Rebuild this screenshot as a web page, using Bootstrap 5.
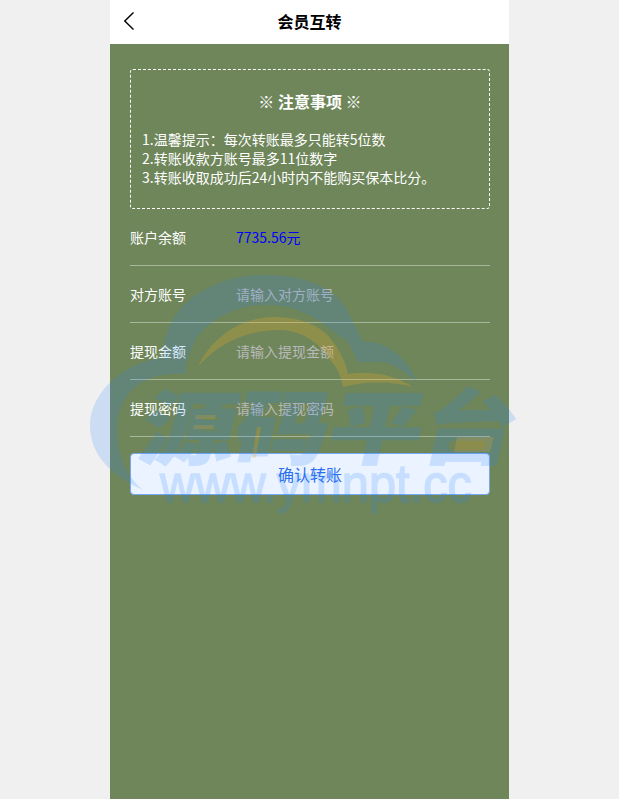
<!DOCTYPE html>
<html lang="zh-CN">
<head>
<meta charset="utf-8">
<title>会员互转</title>
<link href="https://cdn.jsdelivr.net/npm/bootstrap@5.3.0/dist/css/bootstrap.min.css" rel="stylesheet">
<style>
html,body{height:100%;}
body{background:#f0f0f0;font-family:"Noto Sans CJK SC","Liberation Sans",sans-serif;font-size:14px;overflow:hidden;}
.phone{width:399px;min-height:799px;background:#6e8659;}
.topbar{height:44px;background:#fff;color:#000;}
.topbar-title{font-size:16px;font-weight:700;line-height:42px;}
.back-icon{left:14px;top:12px;}
.form-area{padding:25px 19px 0 20px;}
.notice{height:140px;border:1px dashed #fff;border-radius:3px;color:#fff;padding:19px 11px 0;}
.notice-title{font-size:16px;font-weight:700;line-height:24px;margin:0 0 17px;}
.notice-text{line-height:19px;font-size:14px;}
.field{height:57px;border-bottom:1px solid rgba(255,255,255,.4);color:#fff;line-height:20px;}
.field-label{width:106px;flex:none;}
.field-value{color:#00f;}
.field-input{background:transparent;border:0;border-radius:0;padding:0;color:#fff;font-size:14px;box-shadow:none;}
.field-input::placeholder{color:#b9b9b9;opacity:1;}
.field-input:focus{background:transparent;box-shadow:none;color:#fff;}
.submit-btn{height:42px;margin-top:16px;background:#eaf3ff;border:1px solid #76a9f5;border-radius:4px;color:#2a6ef0;font-size:16px;padding:0;}
.watermark{left:0;top:0;pointer-events:none;}
.wm-blue{opacity:.18;fill:#2c85ff;stroke:#2c85ff;}
.wm-cn{font-family:"Noto Sans CJK SC",sans-serif;font-weight:900;font-size:92px;stroke-width:1px;}
.wm-en{font-family:"Liberation Sans",sans-serif;font-size:54px;stroke-width:1.5px;}
</style>
</head>
<body>
<div class="phone mx-auto">
  <header class="topbar position-relative text-center">
    <svg class="back-icon position-absolute" width="12" height="20" viewBox="0 0 12 20"><path d="M9.5 0.5 L0.8 9 L9.5 17.5" fill="none" stroke="#000" stroke-width="1.4"/></svg>
    <div class="topbar-title">会员互转</div>
  </header>
  <main class="form-area">
    <section class="notice">
      <h2 class="notice-title text-center">※ 注意事项 ※</h2>
      <div class="notice-text">1.温馨提示：每次转账最多只能转5位数<br>2.转账收款方账号最多11位数字<br>3.转账收取成功后24小时内不能购买保本比分。</div>
    </section>
    <div class="field d-flex align-items-center"><span class="field-label">账户余额</span><span class="field-value">7735.56元</span></div>
    <div class="field d-flex align-items-center"><span class="field-label">对方账号</span><input class="form-control field-input" placeholder="请输入对方账号"></div>
    <div class="field d-flex align-items-center"><span class="field-label">提现金额</span><input class="form-control field-input" placeholder="请输入提现金额"></div>
    <div class="field d-flex align-items-center"><span class="field-label">提现密码</span><input class="form-control field-input" type="text" placeholder="请输入提现密码"></div>
    <button class="btn submit-btn w-100" type="button">确认转账</button>
  </main>
</div>
<svg class="watermark position-absolute" width="619" height="799" viewBox="0 0 619 799">
  <path fill="#2c85ff" fill-opacity=".18" d="M143 490 C118 478 90 460 90 425 C90 392 125 362 162 358 C164 335 172 312 193 297 C215 281 240 275 267 275 C305 275 335 288 347 310 L363 342 C385 340 408 358 417 382 C405 372 392 362 380 362 L357 362 C352 345 345 337 340 337 C320 318 295 305 267 305 C235 305 213 318 197 337 C190 350 186 362 185 374 C170 373 150 375 135 387 C120 400 115 420 118 440 C120 462 130 480 143 490 Z"/>
  <path fill="#f0aa1e" fill-opacity=".25" d="M198 367 C212 335 245 317 273 317 C300 317 322 325 333 342 C341 352 346 364 348 374 C372 370 395 375 413 387 C395 382 370 380 343 387 C340 372 335 365 330 360 C318 340 298 330 280 330 C255 330 222 338 198 367 Z"/>
  <g class="wm-blue">
    <text class="wm-cn" transform="translate(136 458) skewX(-12) scale(1.03 .88)" textLength="365">源码平台</text>
    <text class="wm-en" x="160" y="502" textLength="312" lengthAdjust="spacingAndGlyphs">www.ymnpt.cc</text>
  </g>
  <path fill="#f0aa1e" fill-opacity=".22" d="M457 437 L494 437 L490 452 L454 452 Z"/>
  <path fill="#f0aa1e" fill-opacity=".22" d="M196 415 L216 415 L215 419 L195 419 Z M194 425 L214 425 L213 429 L193 429 Z"/>
  <path fill="#f0aa1e" fill-opacity=".22" d="M257 427 L261 427 L256 458 L252 458 Z"/>
</svg>
<script src="https://cdn.jsdelivr.net/npm/bootstrap@5.3.0/dist/js/bootstrap.bundle.min.js"></script>
</body>
</html>
